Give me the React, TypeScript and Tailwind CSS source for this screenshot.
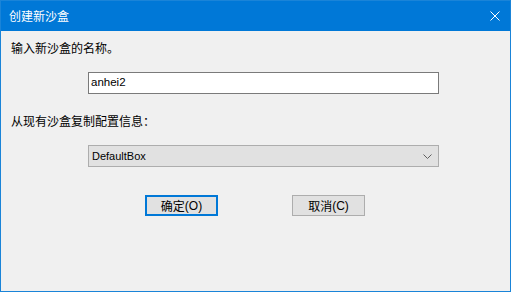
const cjk = { fontFamily: '"Noto Sans CJK SC", "Microsoft YaHei", sans-serif' };
const latin = { fontFamily: '"Liberation Sans", Arial, sans-serif' };

const ChevronDown = () => (
  <svg width="9" height="5" viewBox="0 0 9 5" className="block">
    <path d="M0.5 0.5 L4.5 4.5 L8.5 0.5" fill="none" stroke="#606060" strokeWidth="1" />
  </svg>
);

const CloseIcon = () => (
  <svg width="10" height="10" viewBox="0 0 10 10" className="block">
    <path d="M0.5 0.5 L9.5 9.5 M9.5 0.5 L0.5 9.5" stroke="#ffffff" strokeWidth="1" />
  </svg>
);

const Button = ({ label, hotkey, primary }: { label: string; hotkey: string; primary?: boolean }) => (
  <button
    className={
      primary
        ? 'flex h-[21px] w-[73px] items-center justify-center border-2 border-[#0078d7] bg-[#e1e1e1] text-[12px] text-black'
        : 'flex h-[21px] w-[73px] items-center justify-center border border-[#adadad] bg-[#e1e1e1] text-[12px] text-black'
    }
    style={cjk}
  >
    {label}
    <span style={latin}>({hotkey})</span>
  </button>
);

export default function App() {
  return (
    <div className="flex h-[292px] w-[511px] flex-col border border-[#1a84d8] bg-[#f0f0f0]">
      <div className="flex h-[30px] shrink-0 items-center justify-between bg-[#0078d7] pl-[8px] pr-[10px]">
        <span className="text-[12px] leading-none text-white" style={cjk}>
          创建新沙盒
        </span>
        <CloseIcon />
      </div>

      <div className="flex flex-1 flex-col">
        <div className="mt-[9px] pl-[10px] text-[12px] leading-[16px] text-black" style={cjk}>
          输入新沙盒的名称。
        </div>

        <div className="ml-[87px] mt-[16px] flex h-[22px] w-[351px] items-center border border-[#7a7a7a] bg-white px-[2px]">
          <span className="text-[11.5px] text-black" style={latin}>
            anhei2
          </span>
        </div>

        <div className="mt-[19px] pl-[10px] text-[12px] leading-[16px] text-black" style={cjk}>
          从现有沙盒复制配置信息：
        </div>

        <div className="ml-[87px] mt-[16px] flex h-[22px] w-[351px] items-center justify-between border border-[#adadad] bg-[#e1e1e1] pl-[3px] pr-[6px]">
          <span className="text-[11px] text-black" style={latin}>
            DefaultBox
          </span>
          <ChevronDown />
        </div>

        <div className="ml-[144px] mt-[28px] flex gap-[74px]">
          <Button label="确定" hotkey="O" primary />
          <Button label="取消" hotkey="C" />
        </div>
      </div>
    </div>
  );
}
